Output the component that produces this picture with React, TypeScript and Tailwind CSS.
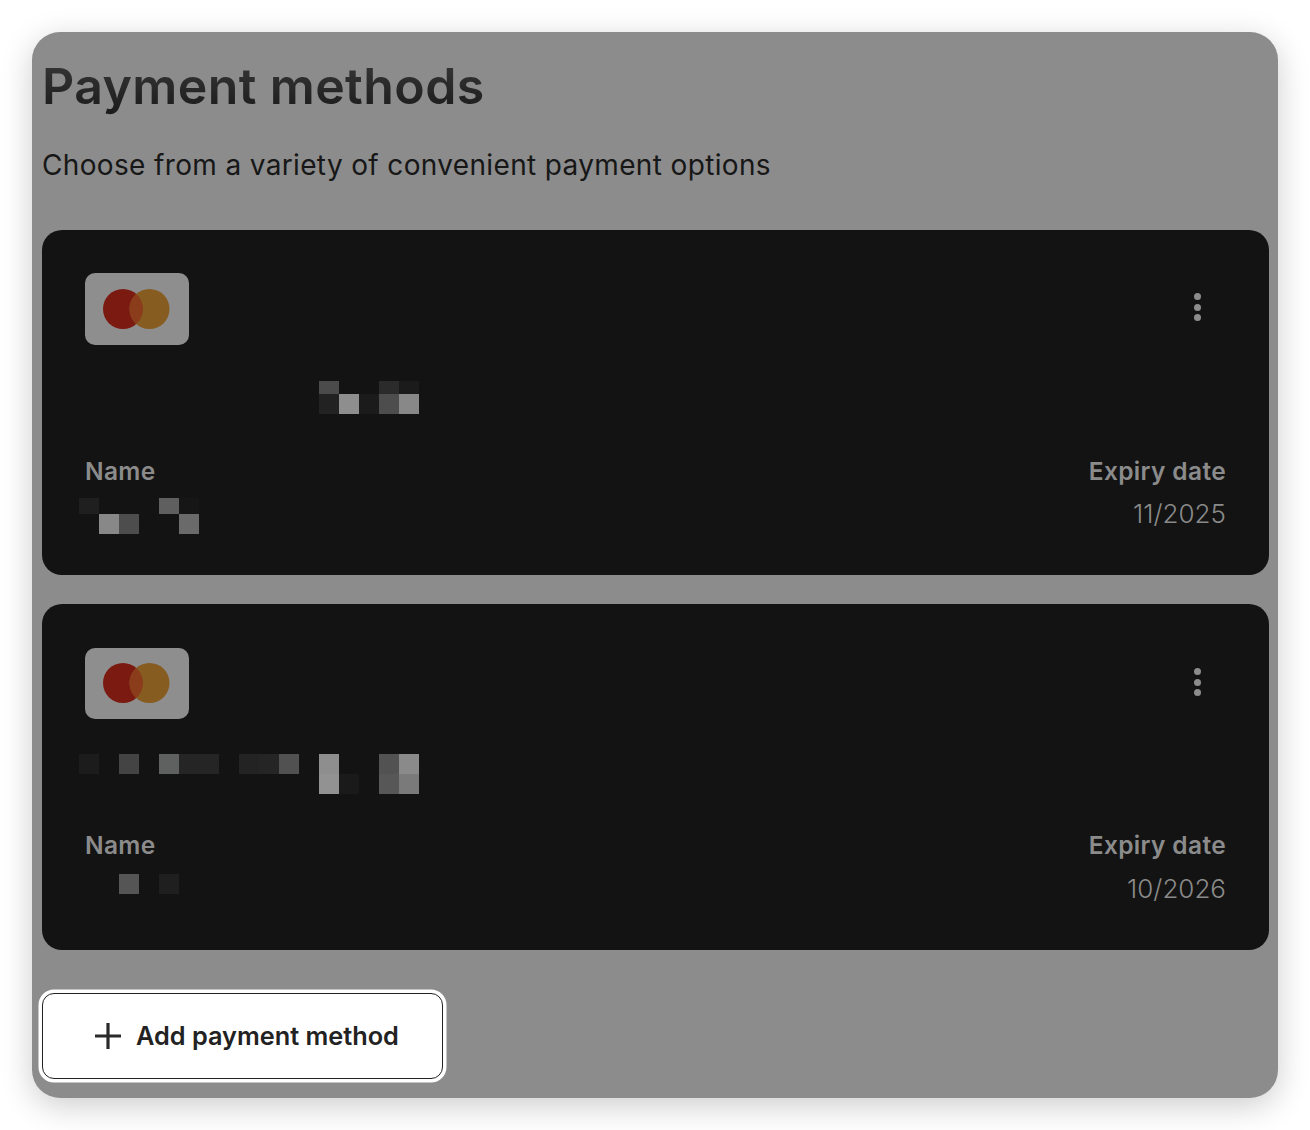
const font = { fontFamily: "Inter, 'Noto Sans', sans-serif" };

type Cell = [number, string];
type Row = { height: number; cells: Cell[] };

const cards: {
  heightClass: string;
  topClass: string;
  logoHeight: string;
  numberRows: Row[];
  numberClass: string;
  footerClass: string;
  nameRows: Row[];
  nameClass: string;
  expiryClass: string;
  expiry: string;
}[] = [
  {
    heightClass: "h-[345px]",
    topClass: "pt-[43px]",
    logoHeight: "h-[72px]",
    numberClass: "mt-[36px] h-[33px]",
    numberRows: [
      { height: 13, cells: [[12, "#4b4b4b"], [15, "#2b2b2b"], [16, "#1b1b1b"]] },
      { height: 20, cells: [[12, "#222222"], [13, "#8e8e8e"], [14, "#1b1b1b"], [15, "#4d4d4d"], [16, "#888888"]] },
    ],
    footerClass: "mt-[40px]",
    nameClass: "mt-[10px] h-[36px]",
    nameRows: [
      { height: 16, cells: [[0, "#1f1f1f"], [4, "#5f5f5f"], [5, "#161616"]] },
      { height: 20, cells: [[1, "#888888"], [2, "#4d4d4d"], [5, "#6a6a6a"]] },
    ],
    expiryClass: "mt-[9px]",
    expiry: "11/2025",
  },
  {
    heightClass: "h-[346px]",
    topClass: "pt-[44px]",
    logoHeight: "h-[71px]",
    numberClass: "mt-[35px] h-[40px]",
    numberRows: [
      { height: 20, cells: [[0, "#1c1c1c"], [2, "#444444"], [4, "#5f6060"], [5, "#252525"], [6, "#252525"], [8, "#232323"], [9, "#252525"], [10, "#515151"], [12, "#8e8e8e"], [15, "#525252"], [16, "#8a8a8a"]] },
      { height: 20, cells: [[12, "#929292"], [13, "#1a1a1a"], [15, "#575757"], [16, "#7a7a7a"]] },
    ],
    footerClass: "mt-[34px]",
    nameClass: "mt-[12px] h-[20px]",
    nameRows: [{ height: 20, cells: [[2, "#555555"], [4, "#1f1f1f"]] }],
    expiryClass: "mt-[10px]",
    expiry: "10/2026",
  },
];

// pixelated blocks hiding the real card data, 20px per cell
function Mosaic({ rows, className }: { rows: Row[]; className: string }) {
  return (
    <div className={`-ml-[6px] ${className}`}>
      {rows.map((row, i) => (
        <div key={i} className="relative" style={{ height: row.height }}>
          {row.cells.map(([col, color]) => (
            <span
              key={col}
              className="absolute top-0 bottom-0 w-5"
              style={{ left: col * 20, backgroundColor: color }}
            />
          ))}
        </div>
      ))}
    </div>
  );
}

function CardLogo({ heightClass }: { heightClass: string }) {
  return (
    <div className={`flex w-[104px] items-center justify-center rounded-[10px] bg-[#8e8e8e] pb-px ${heightClass}`}>
      <svg width="68" height="40" viewBox="0 0 68 40">
        <circle cx="20" cy="20" r="20" fill="#7b1a10" />
        <circle cx="46.5" cy="20" r="20" fill="#875c20" />
        <path d="M33.25 5a20 20 0 0 1 0 30a20 20 0 0 1 0-30z" fill="#8a3c1b" />
      </svg>
    </div>
  );
}

function MoreDots() {
  return (
    <div className="flex flex-col gap-[3.5px] pt-[20px] pr-[25px]">
      <span className="size-[7px] rounded-full bg-[#8c8c8c]" />
      <span className="size-[7px] rounded-full bg-[#8c8c8c]" />
      <span className="size-[7px] rounded-full bg-[#8c8c8c]" />
    </div>
  );
}

function PaymentCard({ card }: { card: (typeof cards)[number] }) {
  return (
    <div className={`flex flex-col rounded-[20px] bg-[#131313] px-[43px] ${card.topClass} ${card.heightClass}`}>
      <div className="flex items-start justify-between">
        <CardLogo heightClass={card.logoHeight} />
        <MoreDots />
      </div>
      <Mosaic rows={card.numberRows} className={card.numberClass} />
      <div className={`flex justify-between ${card.footerClass}`}>
        <div>
          <p className="text-[24.5px] leading-[34px] font-semibold tracking-[0.35px] text-[#8b8b8b]">Name</p>
          <Mosaic rows={card.nameRows} className={card.nameClass} />
        </div>
        <div className="text-right">
          <p className="text-[24.5px] leading-[34px] font-semibold tracking-[0.35px] text-[#8b8b8b]">Expiry date</p>
          <p className={`text-[26px] leading-[34px] font-light text-[#8a8a8a] ${card.expiryClass}`}>{card.expiry}</p>
        </div>
      </div>
    </div>
  );
}

export default function App() {
  return (
    <div className="h-[1130px] bg-white pt-8 pl-8" style={font}>
      <div className="h-[1066px] w-[1246px] rounded-[28px] bg-[#8c8c8c] pt-[20px] pl-[10px] shadow-[0_8px_32px_rgba(0,0,0,0.2)]">
        <h1 className="bg-gradient-to-b from-[#3c3c3c] to-[#181818] bg-clip-text text-[50px] leading-[68px] font-semibold tracking-[0.4px] text-transparent">
          Payment methods
        </h1>
        <p className="mt-[25px] text-[28px] leading-[40px] tracking-[0.35px] text-[#171717]">
          Choose from a variety of convenient payment options
        </p>
        <div className="mt-[45px] flex w-[1227px] flex-col gap-[29px]">
          {cards.map((card) => (
            <PaymentCard key={card.expiry} card={card} />
          ))}
        </div>
        <button
          type="button"
          className="mt-[43px] flex h-[86px] w-[401px] items-center gap-[14px] rounded-[12px] border border-[#222222] bg-white pl-[51px] text-[25.3px] font-semibold text-[#222222] shadow-[0_0_0_3.5px_#ffffff]"
        >
          <svg width="28" height="28" viewBox="0 0 28 28" fill="none" stroke="#2a2a2a" strokeWidth="3.2">
            <path d="M14 1v26M1 14h26" />
          </svg>
          Add payment method
        </button>
      </div>
    </div>
  );
}
